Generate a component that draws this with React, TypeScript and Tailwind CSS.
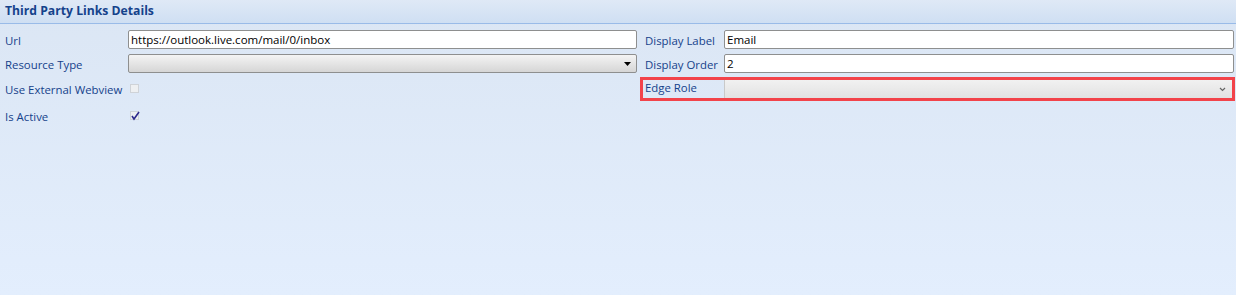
import React from "react"

const font = { fontFamily: '"Open Sans", "Noto Sans", sans-serif' }

function Label({ children }: { children: React.ReactNode }) {
  return <span className="relative -top-[1px] text-[11.4px] font-medium text-[#15428b] leading-none whitespace-nowrap">{children}</span>
}

function TextBox({ value }: { value: string }) {
  return (
    <div className="flex h-[19px] flex-1 items-center rounded-[2px] border border-[#8e8f8f] bg-white px-[2px] text-[11.5px] text-black">
      {value}
    </div>
  )
}

function ComboBox() {
  return (
    <div className="flex h-[19px] flex-1 items-center justify-end rounded-[2px] border border-[#8e8f8f] bg-gradient-to-b from-[#f4f4f4] to-[#d6d6d6] pr-[5px]">
      <svg width="7" height="4" viewBox="0 0 7 4">
        <path d="M0 0h7L3.5 4z" fill="#000" />
      </svg>
    </div>
  )
}

function CheckBox({ checked }: { checked?: boolean }) {
  return (
    <div className="relative h-[9px] w-[9px] border border-[#cfd3d8] bg-[#eef0f2]">
      {checked && (
        <svg className="absolute -left-[1px] -top-[2px]" width="11" height="11" viewBox="0 0 11 11">
          <path d="M2 6l2 3 5-7" fill="none" stroke="#2e2a8c" strokeWidth="1.6" />
        </svg>
      )}
    </div>
  )
}

export default function App() {
  return (
    <div className="h-[295px] w-[1236px] bg-gradient-to-b from-[#dbe6f4] to-[#e3eefd]" style={font}>
      {/* header */}
      <div className="flex h-[24px] items-center border-b border-[#99bbe8] bg-gradient-to-b from-[#dfe9f6] to-[#cfdff3] pl-[5px]">
        <span className="text-[12.2px] font-bold text-[#15428b]">Third Party Links Details</span>
      </div>

      <div className="flex pt-[6px]">
        {/* left column */}
        <div className="flex w-[640px] flex-col pl-[5px] pr-[3px]">
          <div className="flex h-[19px] items-center">
            <div className="w-[123px]"><Label>Url</Label></div>
            <TextBox value="https://outlook.live.com/mail/0/inbox" />
          </div>
          <div className="mt-[5px] flex h-[19px] items-center">
            <div className="w-[123px]"><Label>Resource Type</Label></div>
            <ComboBox />
          </div>
          <div className="mt-[6px] flex h-[19px] items-center">
            <div className="w-[125px]"><Label>Use External Webview</Label></div>
            <CheckBox />
          </div>
          <div className="mt-[8px] flex h-[19px] items-center">
            <div className="w-[125px]"><Label>Is Active</Label></div>
            <CheckBox checked />
          </div>
        </div>

        {/* right column */}
        <div className="flex flex-1 flex-col">
          <div className="flex h-[19px] items-center pl-[5px] pr-[2px]">
            <div className="w-[79px]"><Label>Display Label</Label></div>
            <TextBox value="Email" />
          </div>
          <div className="mt-[5px] flex h-[19px] items-center pl-[5px] pr-[2px]">
            <div className="w-[79px]"><Label>Display Order</Label></div>
            <TextBox value="2" />
          </div>
          <div className="mt-[4px] mr-[1px] flex h-[24px] items-stretch border-[3px] border-[#f2434a]">
            <div className="flex w-[81px] items-center pl-[2px]"><Label>Edge Role</Label></div>
            <div className="flex flex-1 items-center justify-end border-l border-[#c9c9c9] bg-gradient-to-b from-[#f1f1f1] to-[#e2e2e2] pr-[6px]">
              <svg width="7" height="5" viewBox="0 0 7 5">
                <path d="M1 1l2.5 2.5L6 1" fill="none" stroke="#666" strokeWidth="1.2" />
              </svg>
            </div>
          </div>
        </div>
      </div>
    </div>
  )
}
